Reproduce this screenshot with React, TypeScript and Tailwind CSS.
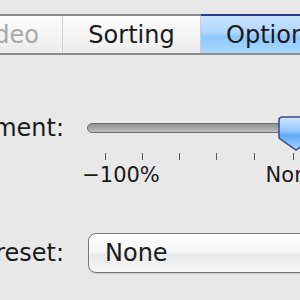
export default function App() {
  const ticks = [105, 142, 179, 216, 254, 293, 330];

  return (
    <div className="w-[300px] h-[300px] overflow-hidden bg-[#e8e8e8] font-['DejaVu_Sans',sans-serif] text-[#1a1a1a]">
      {/* tab bar */}
      <div className="mt-[14px] ml-[-75px] flex h-[41px] w-[500px] border-y-2 border-[#8c8c8c]">
        <div className="flex w-[138px] shrink-0 items-center justify-end pr-[23px] border-r border-[#cfcfcf] bg-gradient-to-b from-[#fdfdfd] via-[#f4f4f4] to-[#ececec] text-[24px] text-[#a8a8a8]">
          Video
        </div>
        <div className="flex w-[138px] shrink-0 items-center justify-center border-r border-[#cfcfcf] bg-gradient-to-b from-[#fdfdfd] via-[#f4f4f4] to-[#ececec] text-[24px]">
          Sorting
        </div>
        <div className="flex w-[140px] shrink-0 items-center pl-[25px] border-t-2 border-t-[#2c3a8c] -mt-[2px] bg-[linear-gradient(to_bottom,#c8e3ff_0%,#b0d7ff_45%,#8ec8ff_55%,#a8d8ff_100%)] text-[24px]">
          Options
        </div>
      </div>

      {/* slider row */}
      <div className="mt-[59px] flex items-start">
        <div className="ml-[-134px] w-[200px] shrink-0 pr-[2px] text-right text-[24px] leading-[28px]">Adjustment:</div>
        <div className="relative ml-[21px] h-[70px] w-[260px] shrink-0">
          <div className="absolute left-0 top-[9px] h-[10px] w-[260px] rounded-full border border-[#6e6e6e] bg-gradient-to-b from-[#8e8e8e] via-[#a8a8a8] to-[#bdbdbd]" />
          {ticks.map((x) => (
            <div key={x} className="absolute top-[39px] h-[7px] w-px bg-[#5a5a5a]" style={{ left: x - 87 }} />
          ))}
          <div className="absolute top-[49px] w-[80px] -translate-x-1/2 text-center text-[21px] leading-[24px]" style={{ left: 34 }}>
            −100%
          </div>
          <div className="absolute top-[49px] w-[80px] -translate-x-1/2 text-center text-[21px] leading-[24px]" style={{ left: 206 }}>
            None
          </div>
          <svg className="absolute left-[191px] top-[2px]" width="36" height="36" viewBox="0 0 36 36">
            <defs>
              <linearGradient id="knob" x1="0" y1="0" x2="0" y2="1">
                <stop offset="0" stopColor="#cfe6ff" />
                <stop offset="0.45" stopColor="#8fc4ff" />
                <stop offset="0.55" stopColor="#5ea8f5" />
                <stop offset="1" stopColor="#a6d6ff" />
              </linearGradient>
            </defs>
            <path d="M5 1 H32 Q35 1 35 4 V22 L18 34 L1 22 V4 Q1 1 5 1 Z" fill="url(#knob)" stroke="#3a4a8a" strokeWidth="1.5" />
          </svg>
        </div>
      </div>

      {/* preset row */}
      <div className="mt-[49px] flex items-center">
        <div className="ml-[-134px] w-[200px] shrink-0 pr-[2px] text-right text-[24px]">Preset:</div>
        <div className="ml-[22px] flex h-[40px] w-[260px] shrink-0 items-center rounded-[8px] border border-[#777] bg-[linear-gradient(to_bottom,#ffffff_0%,#f6f6f6_45%,#e9e9e9_55%,#f7f7f7_100%)] pl-[16px] text-[24px] shadow-[0_1px_1px_rgba(0,0,0,0.15)]">
          None
        </div>
      </div>
    </div>
  );
}
